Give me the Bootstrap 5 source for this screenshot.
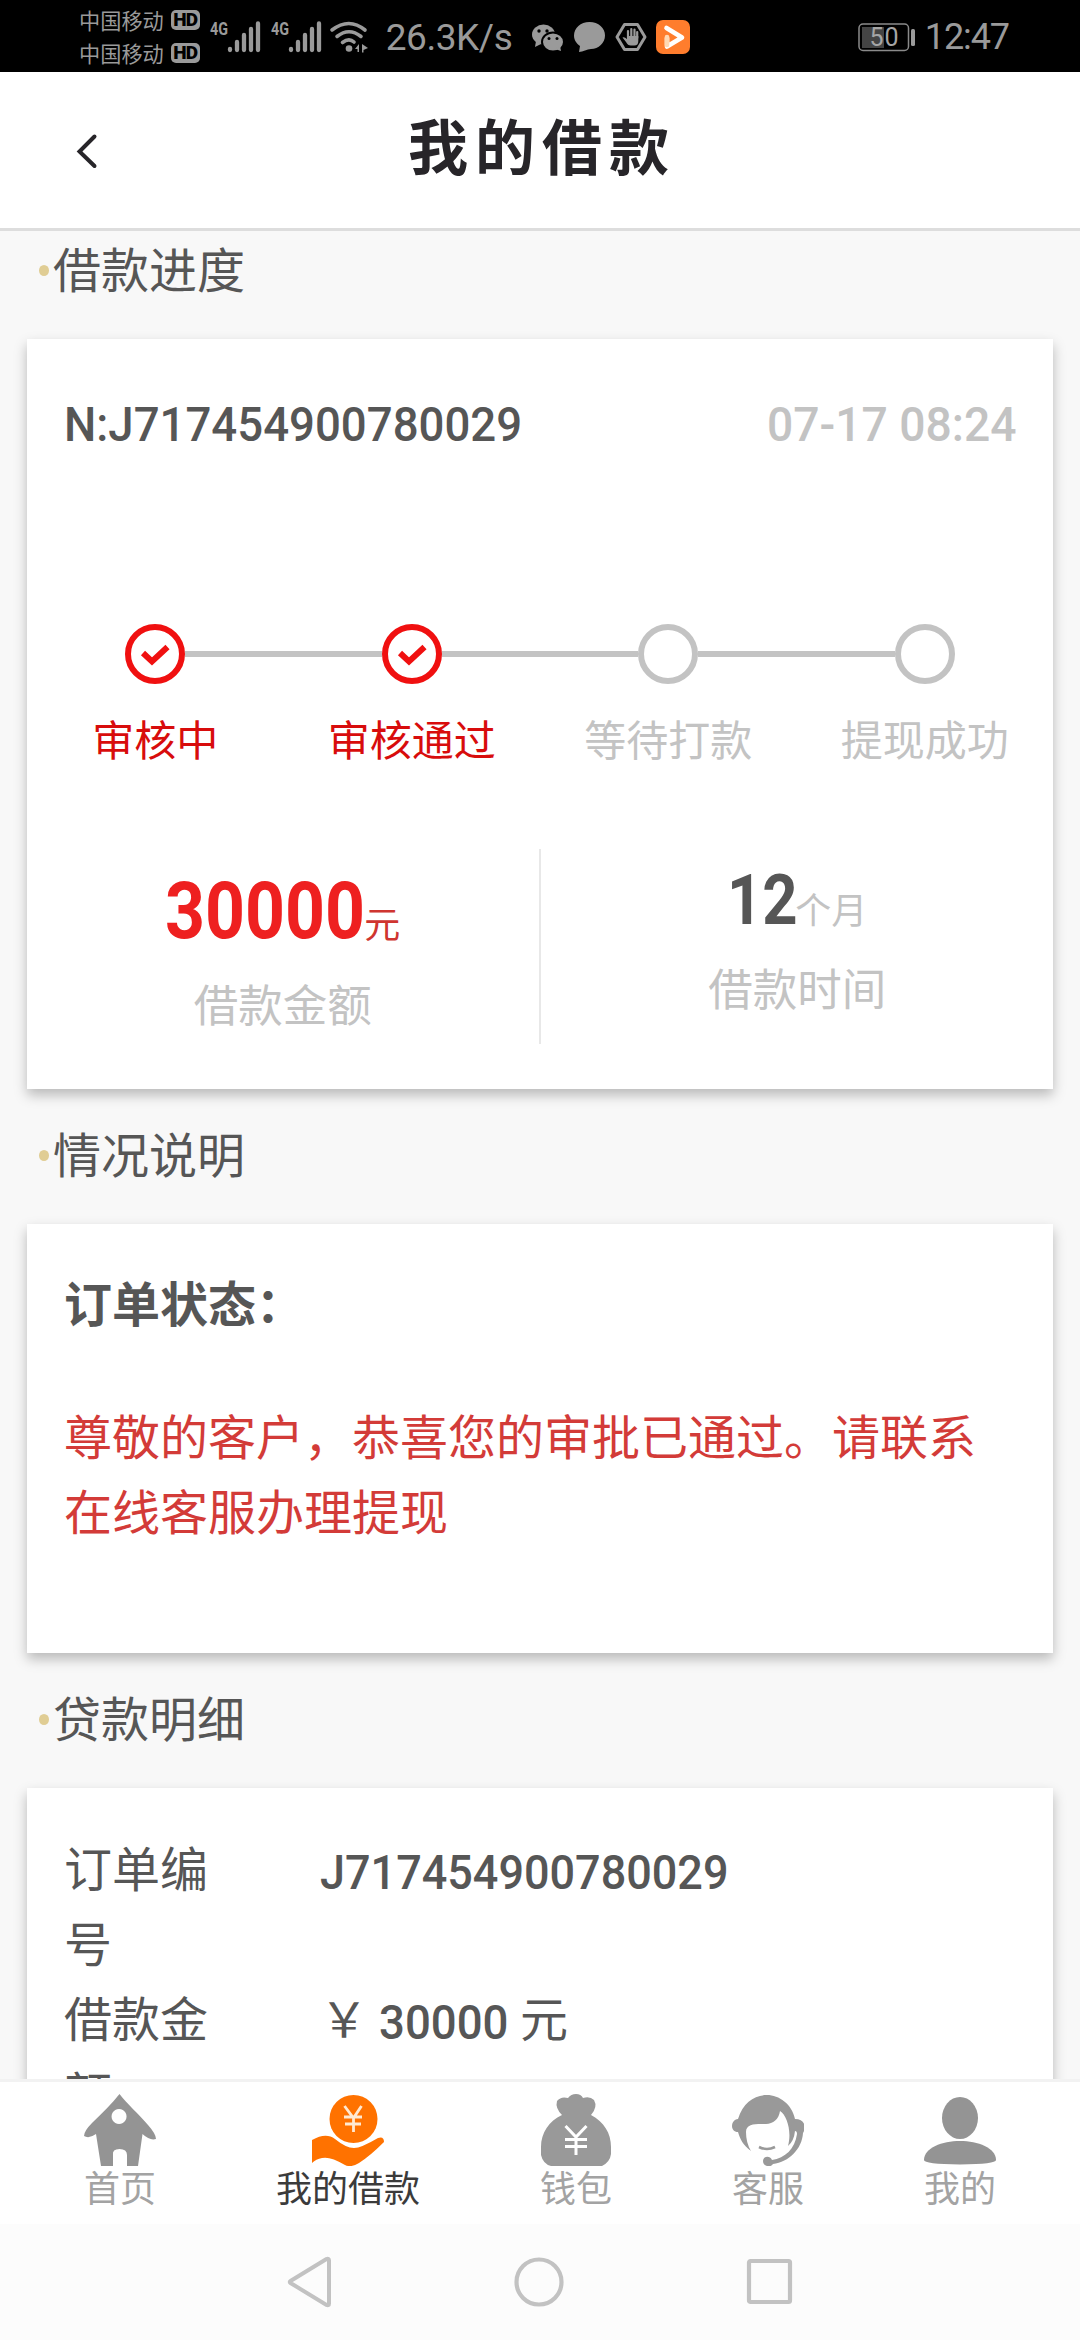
<!DOCTYPE html>
<html lang="zh-CN">
<head>
<meta charset="utf-8">
<meta name="viewport" content="width=device-width, initial-scale=1">
<title>我的借款</title>
<link href="https://cdn.jsdelivr.net/npm/bootstrap@5.3.0/dist/css/bootstrap.min.css" rel="stylesheet">
<style>
body{width:1080px;height:2340px;background:#f8f8f8;color:#565656;font-family:Roboto,"Noto Sans CJK SC",sans-serif;font-size:48px;line-height:75px}
svg{display:block;flex:none}
.statusbar{height:72px;background:#000;color:#9a9a9a;padding-left:79px;padding-right:71px;line-height:1}
.carrier{font-size:21.2px;line-height:32.5px;font-family:"Noto Sans CJK SC",sans-serif;margin-top:1px}
.hd{width:29px;height:20px;border-radius:5px;background:#9a9a9a;color:#000;font:900 19px/20px Roboto,sans-serif;text-align:center;margin-left:7px;letter-spacing:-.8px}
.speed{font-size:37px;letter-spacing:-.45px;padding-top:2px}
.clock{font-size:36px;letter-spacing:-1.1px;padding-top:2px}
.topbar{height:159px;border-bottom:3px solid #ddd;background:#fff}
.topbar .back{left:75px;top:61px}
.page-title{font:700 60px/76px "Noto Sans CJK SC",sans-serif;letter-spacing:7px;color:#272529;padding-left:4px;margin:34px 0 0}
main{padding:5px 27px 0;min-height:0}
.sec-title{font-size:48px;font-weight:400;line-height:72px;margin:0 0 31px;padding-left:12px}
.dot{width:10px;height:11px;border-radius:50%;background:#e0cd94;margin:-4px 4px 0 0}
.panel{background:#fff;border:0;border-radius:0;box-shadow:0 6px 12px rgba(0,0,0,.26);margin-bottom:32px;color:inherit}
.panel-progress{height:750px}
.panel-status{height:429px;padding:44px 37px 0}
.panel-detail{height:620px;padding:45px 37px 0}
.din{display:inline-block;white-space:pre;transform-origin:0 50%;font-weight:500;font-size:49px}
.din-no{width:454px;transform:scaleX(.93)}
.din-short{width:408px;transform:translateY(2px) scaleX(.918)}
.din-date{width:250px;transform:scaleX(.943)}
.din-sum{width:141px;margin-left:11px;transform:translateY(2px) scaleX(.93)}
.pale{color:#c3c3c3}
.order-head{padding:48px 36px 0 37px;height:285px}
.step{width:25%}
.ring{width:60px;height:60px;border:6px solid #c3c3c3;border-radius:50%;background:#fff}
.rail{height:6px;background:#c3c3c3}
.rail.none{background:transparent}
.step-label{font-size:42px;line-height:60px;margin-top:28px;color:#c3c3c3}
.done .step-label{color:#d80c0c}
.figures{margin-top:77px;height:195px}
.vrule{width:3px;background:#e8e8e8}
.cap{font-size:44.5px;line-height:60px;color:#c3c3c3}
.unit{font-size:36px}
.amount{line-height:96px;margin-top:14px;height:114px;color:#ee2020}
.amount .unit{color:#cf3530}
.amount .din{font-size:80px;font-weight:700;width:199px;transform:scaleX(.872)}
.term{line-height:96px;margin-top:3px;height:109px}
.term .din{font-size:70px;font-weight:700;width:68px;transform:scaleX(.88)}
.notice{color:#d33b38;margin:58px 0 0}
.lbl{width:144px;margin-right:112px;flex:none}
.tabs{height:145px;border-top:3px solid #f2f2f2;background:#fff;padding:12px 84px 0;font-size:36px;line-height:48px;color:#a3a3a3}
.tabs .active{color:#3b3b3b}
.sysnav{height:116px;background:#fcfcfc;padding:0 287px}
</style>
<script src="https://cdn.jsdelivr.net/npm/bootstrap@5.3.0/dist/js/bootstrap.bundle.min.js"></script>
</head>
<body class="d-flex flex-column overflow-hidden">
<div class="statusbar d-flex align-items-center flex-shrink-0">
  <div class="carrier">
    <div class="d-flex align-items-center">中国移动<span class="hd">HD</span></div>
    <div class="d-flex align-items-center">中国移动<span class="hd">HD</span></div>
  </div>
  <svg width="170" height="72" viewBox="200 0 170 72" fill="#9a9a9a">
    <g id="sig"><text x="210" y="35" font-family="Roboto" font-weight="700" font-size="19" textLength="18" lengthAdjust="spacingAndGlyphs">4G</text>
    <path d="M230 50V49M237 50V42M244 50V35M251 50V29M258 50V23.500" stroke="#9a9a9a" stroke-width="4.300" stroke-linecap="round"/></g>
    <use href="#sig" x="61"/>
    <g fill="none" stroke="#9a9a9a" stroke-width="3.600" stroke-linecap="round"><path d="M332 30Q349 17 365 30M337 36.500Q349 27 361 36.500M342.500 42.500Q349 37.500 354 42"/></g>
    <circle cx="349" cy="48.500" r="3.300"/><path d="M355 49l4-5v8h-1.500v-3zM362 44l6 4-4.500 2v2.500H362z"/>
  </svg>
  <span class="speed ms-3">26.3K/s</span>
  <svg class="ms-3" width="165" height="72" viewBox="526 0 165 72" fill="#9a9a9a">
    <ellipse cx="541.500" cy="34.500" rx="11.500" ry="10"/><path d="M534 41l-1 6 6-3z"/>
    <ellipse cx="551" cy="42" rx="11" ry="9.500" stroke="#000" stroke-width="2"/><path d="M553 49l6 2-1-5z"/>
    <g fill="#000"><circle cx="537" cy="31" r="1.700"/><circle cx="545" cy="31" r="1.700"/><circle cx="547" cy="38.500" r="1.500"/><circle cx="555" cy="38.500" r="1.500"/></g>
    <path d="M587.500 22c9 0 15.500 6 15.500 13.500S596.500 49 589 49c-4 0-8 3-12 3l1-6c-3.500-2.500-6-6-6-10.500C572 28 578.500 22 587.500 22z"/>
    <path d="M622.500 24.500h13l7.500 12.500-7.500 12.500h-13L615 37z" fill="none" stroke="#9a9a9a" stroke-width="3" stroke-linejoin="round"/>
    <path d="M626 38V31M629.300 38V29M632.500 38V29.500M635.200 38V32" stroke="#9a9a9a" stroke-width="2.200" stroke-linecap="round"/><path d="M625 36h11.300v5q0 4.500-4 4.500h-3.500q-3 0-4.800-3.500l-3.500-4.500q1.800-1 4.500 1.500z"/>
    <rect x="654" y="20" width="34" height="34" rx="7" fill="#ff7d2d"/>
    <path d="M664.500 28L680 37.500 665 46.500V38" fill="none" stroke="#fff" stroke-width="4.600" stroke-linejoin="round" stroke-linecap="round"/><path d="M665 45V37" stroke="#ffd9b4" stroke-width="4.600" stroke-linecap="round"/>
  </svg>
  <svg class="ms-auto" width="60" height="72" viewBox="855 0 60 72"><rect x="857" y="24" width="49.500" height="26.500" rx="4" fill="none" stroke="#8a8a8a" stroke-width="1.500"/><rect x="860" y="27" width="22" height="21" fill="#444"/><rect x="909" y="29" width="4" height="17" rx="1.500" fill="#9a9a9a"/><text x="867.500" y="46" font-family="Roboto" font-size="25" fill="#a5a5a5" textLength="29">50</text></svg>
  <span class="clock ps-2">12:47</span>
</div>
<header class="topbar position-relative text-center flex-shrink-0">
  <svg class="back position-absolute" width="24" height="36" viewBox="0 0 24 36"><path d="M19.500 3.500L4.500 18.500 19.500 33" fill="none" stroke="#272529" stroke-width="4" stroke-linecap="round"/></svg>
  <h1 class="page-title">我的借款</h1>
</header>
<main class="flex-grow-1 overflow-hidden">
  <h2 class="sec-title d-flex align-items-center"><span class="dot"></span>借款进度</h2>
  <section class="card panel panel-progress">
    <div class="order-head d-flex justify-content-between"><span class="din din-no">N:J717454900780029</span><span class="din din-date pale">07-17 08:24</span></div>
    <div class="d-flex">
      <div class="step done text-center"><div class="d-flex align-items-center"><div class="rail none flex-fill"></div>
        <svg width="60" height="60" viewBox="0 0 60 60"><circle cx="30" cy="30" r="27" fill="#fff" stroke="#f01010" stroke-width="6"/><path d="M18 29l9 8.500L42.500 23" fill="none" stroke="#f01010" stroke-width="6"/></svg>
        <div class="rail flex-fill"></div></div><div class="step-label">审核中</div></div>
      <div class="step done text-center"><div class="d-flex align-items-center"><div class="rail flex-fill"></div>
        <svg width="60" height="60" viewBox="0 0 60 60"><circle cx="30" cy="30" r="27" fill="#fff" stroke="#f01010" stroke-width="6"/><path d="M18 29l9 8.500L42.500 23" fill="none" stroke="#f01010" stroke-width="6"/></svg>
        <div class="rail flex-fill"></div></div><div class="step-label">审核通过</div></div>
      <div class="step text-center"><div class="d-flex align-items-center"><div class="rail flex-fill"></div><div class="ring"></div><div class="rail flex-fill"></div></div><div class="step-label">等待打款</div></div>
      <div class="step text-center"><div class="d-flex align-items-center"><div class="rail flex-fill"></div><div class="ring"></div><div class="rail none flex-fill"></div></div><div class="step-label">提现成功</div></div>
    </div>
    <div class="figures d-flex text-center">
      <div class="flex-fill w-50"><div class="amount"><span class="din">30000</span><span class="unit">元</span></div><div class="cap">借款金额</div></div>
      <div class="vrule"></div>
      <div class="flex-fill w-50"><div class="term"><span class="din">12</span><span class="unit pale">个月</span></div><div class="cap">借款时间</div></div>
    </div>
  </section>
  <h2 class="sec-title d-flex align-items-center"><span class="dot"></span>情况说明</h2>
  <section class="card panel panel-status">
    <div class="fw-bold">订单状态：</div>
    <p class="notice">尊敬的客户，恭喜您的审批已通过。请联系在线客服办理提现</p>
  </section>
  <h2 class="sec-title d-flex align-items-center"><span class="dot"></span>贷款明细</h2>
  <section class="card panel panel-detail">
    <div class="d-flex"><span class="lbl">订单编号</span><span class="din din-short">J717454900780029</span></div>
    <div class="d-flex"><span class="lbl">借款金额</span><span class="d-flex">￥<span class="din din-sum">30000</span><span>元</span></span></div>
  </section>
</main>
<nav class="tabs d-flex justify-content-between flex-shrink-0">
  <div class="d-flex flex-column align-items-center">
    <svg width="72" height="72" viewBox="0 0 72 72"><path fill="#949494" fill-rule="evenodd" d="M35.500 0C43 10 55 20 64 31q8 9 8 14-6 2-13.500-5L54 72H43V61q0-6-7.500-6T29 61V72H17L12 40Q5 45 0 42q0-5 8-13C18 19 28 10 35.500 0zM35 15a7.500 7.500 0 1 0 .1 0z"/></svg>首页</div>
  <div class="d-flex flex-column align-items-center active">
    <svg width="72" height="72" viewBox="0 0 72 72"><circle cx="41.500" cy="25" r="24" fill="#ff7200"/><path d="M32.500 12l9 12 8-12M41.500 23v15M32 23h18M33 30h16" fill="none" stroke="#ffe9d2" stroke-width="2.800"/><path fill="#ff7200" d="M0 46q14-8 23-1 11 9 19 9 7 0 24-10 6-2 6 4-14 14-25 21-8 5-14 2-15-9-23-7-6 1-10 5z"/></svg>我的借款</div>
  <div class="d-flex flex-column align-items-center">
    <svg width="72" height="72" viewBox="0 0 72 72"><path fill="#999" d="M36 0q5 0 7 4 7-2 11 2 4 7-3 15C64 28 71 39 71 53v7q-1 8-9 12H11Q3 70 1 61v-8C1 39 9 27 22 21q-7-7-5-14 4-5 11-3 3-4 8-4z"/><path d="M25.500 32l10.500 11 10.500-11M36 42v19M25 45.500h22M25 52.500h22" fill="none" stroke="#fff" stroke-width="3"/></svg>钱包</div>
  <div class="d-flex flex-column align-items-center">
    <svg width="72" height="72" viewBox="0 0 72 72"><path fill="#999" d="M19 57C11 51 8 45 6 38-2 38-2 26 6 25 11 8 23 1 35 1s25 9 28 24c9 0 12 7 8 14-1 16-14 29-30 31q-2 3-6 2-4-1-4-5c0-5 7-6 9-1C53 64 63 55 65 40q0-3-2-3-1 10-7 15c4-14-1-31-8-35-1 8-7 13-14 13-9 0-20-1-20 8q0 11 5 19z"/><path d="M27 53q8 4 16 0" fill="none" stroke="#999" stroke-width="2.600"/></svg>客服</div>
  <div class="d-flex flex-column align-items-center">
    <svg width="72" height="72" viewBox="0 0 72 72" fill="#949494"><ellipse cx="36" cy="24" rx="18" ry="21"/><path d="M36 47c18 0 36 7 36 19q0 4-36 4.500Q0 70 0 66C0 54 18 47 36 47z"/></svg>我的</div>
</nav>
<div class="sysnav d-flex justify-content-between align-items-center flex-shrink-0">
  <svg width="46" height="52" viewBox="0 0 46 52"><path d="M39.500 3L3.500 25q-1.500 1 0 2l36 22q2.500 1 2.500-1.500v-43Q42 2 39.500 3z" fill="none" stroke="#c2c2c2" stroke-width="4"/></svg>
  <svg width="50" height="52" viewBox="0 0 50 52"><circle cx="25" cy="26" r="22.500" fill="none" stroke="#c2c2c2" stroke-width="4.200"/></svg>
  <svg width="48" height="52" viewBox="0 0 48 52"><rect x="4" y="5" width="41" height="41" rx="1.500" fill="none" stroke="#c2c2c2" stroke-width="4.200"/></svg>
</div>
</body>
</html>
